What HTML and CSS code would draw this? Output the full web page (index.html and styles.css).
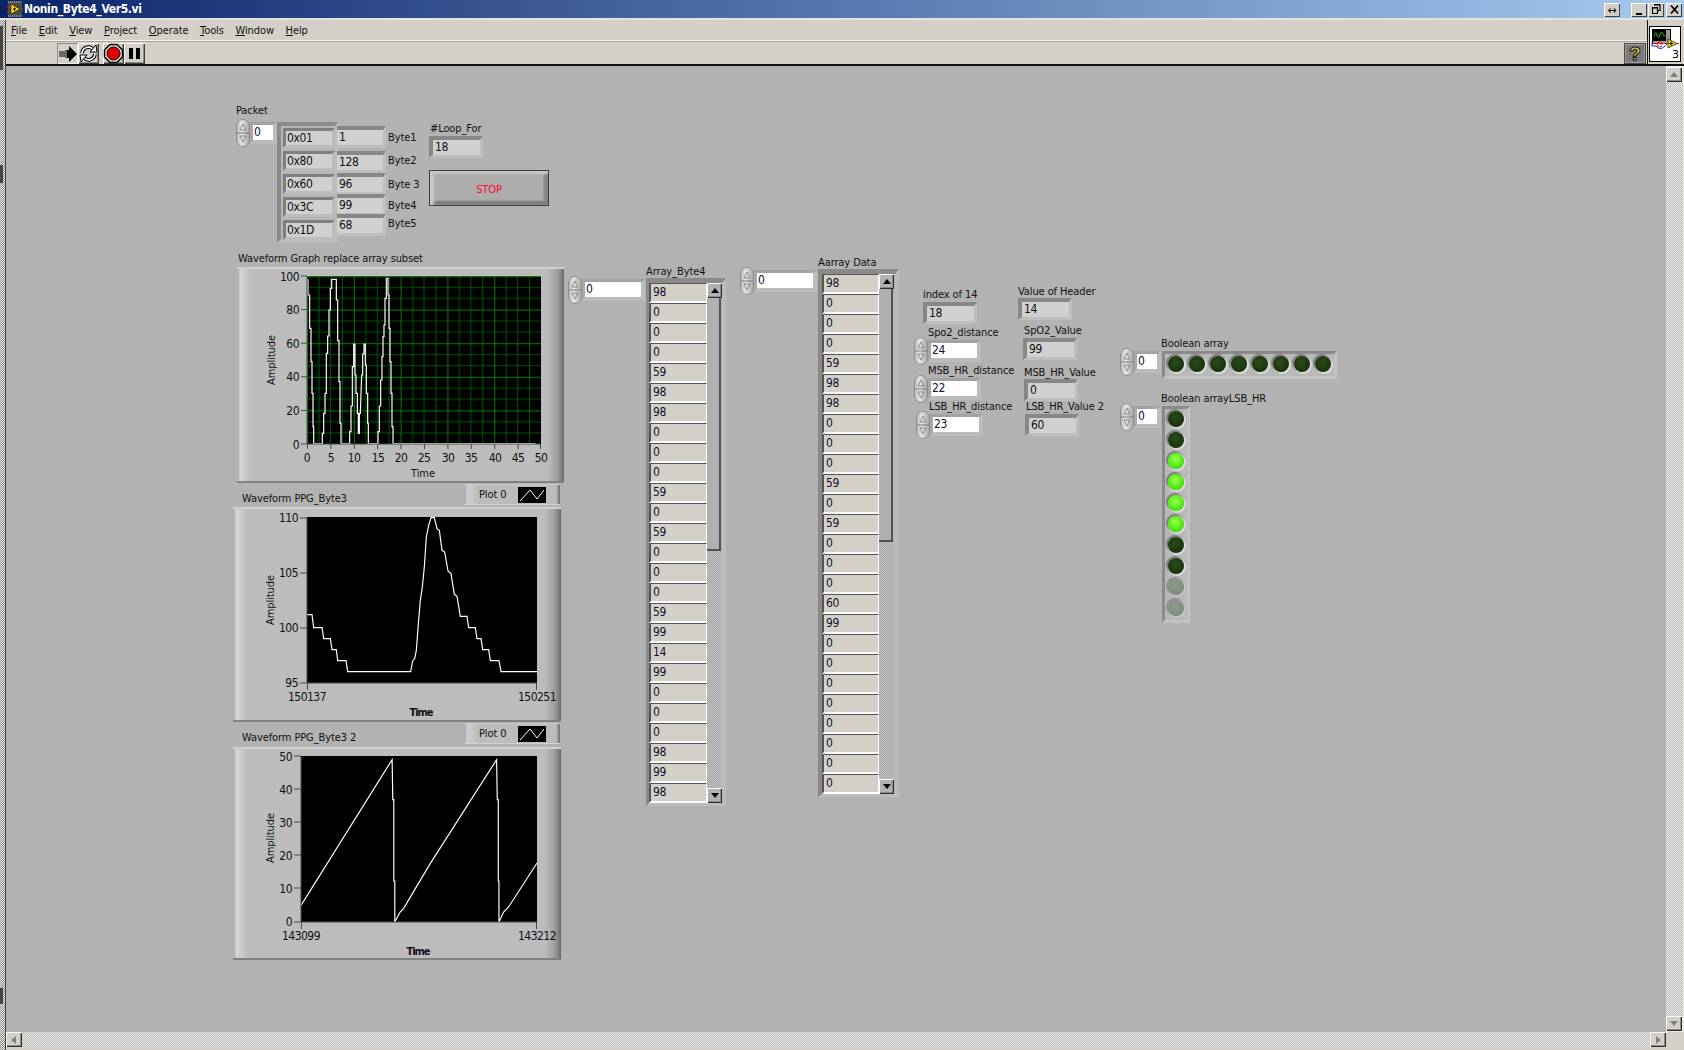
FILE: index.html
```html
<!DOCTYPE html>
<html lang="en">
<head>
<meta charset="utf-8">
<title>Nonin_Byte4_Ver5.vi</title>
<link rel="stylesheet" href="styles.css">
</head>
<body>
<svg class="defs" aria-hidden="true">
  <symbol id="spin" viewBox="0 0 14 28">
    <rect x="0.5" y="0.5" width="13" height="27" rx="6.5" fill="url(#spinfill)" stroke="#8c8c8c"/>
    <path d="M1 14h12" stroke="#7a7a7a"/>
    <path d="M7 5l-3 6M7 5l3 6M4 11h6M7 23l-3-6M7 23l3-6M4 17h6" stroke="#777" stroke-width="0.8" fill="none"/>
  </symbol>
  <linearGradient id="spinfill" x1="0" x2="1" y1="0" y2="0">
    <stop offset="0" stop-color="#b8b8b8"/><stop offset="0.4" stop-color="#e4e4e4"/><stop offset="1" stop-color="#a4a4a4"/>
  </linearGradient>
  <pattern id="grid" patternUnits="userSpaceOnUse" x="307" y="276" width="46.8" height="33.6">
    <rect width="46.8" height="33.6" fill="#000"/>
    <rect y="11" width="46.8" height="1" fill="#005000"/>
    <rect y="22" width="46.8" height="1" fill="#005000"/>
    <rect x="11.5" width="1" height="33.6" fill="#005a00"/>
    <rect x="23" width="1" height="33.6" fill="#005a00"/>
    <rect x="34.9" width="1" height="33.6" fill="#005a00"/>
    <rect x="0" width="1" height="33.6" fill="#008000"/>
    <rect y="0" width="46.8" height="1" fill="#008000"/>
  </pattern>
</svg>

<div class="window">
  <header class="titlebar">
    <svg class="ti-icon" viewBox="0 0 16 16">
      <rect x="1" y="0" width="14" height="16" fill="#4a4a4a"/>
      <path d="M1 1h14M1 15h14" stroke="#ccc" stroke-dasharray="1 1"/>
      <path d="M4 3l9 5-9 5z" fill="#f6e000" stroke="#222" stroke-width="0.7"/>
      <path d="M0 6h4M0 10h4" stroke="#e02020"/>
      <path d="M13 8h3" stroke="#e02020"/>
      <path d="M6 8h3M7.500 6.500v3" stroke="#000"/>
    </svg>
    <span class="ti-text">Nonin_Byte4_Ver5.vi</span>
    <span class="wbtn wbtn-resize">↔</span>
    <span class="wbtn wbtn-min"><svg viewBox="0 0 15 13"><path d="M4 10h6v2H4z"/></svg></span>
    <span class="wbtn wbtn-max"><svg viewBox="0 0 15 13"><path d="M5 1.500h6v6h-2M3.500 4.500h5v6h-5z" fill="none" stroke="#000" stroke-width="1.200"/><path d="M5 1h6v1.500H5zM3 4h6v1.500H3z"/></svg></span>
    <span class="wbtn wbtn-close"><svg viewBox="0 0 15 13"><path d="M4 2.500l7 8M11 2.500l-7 8" stroke="#000" stroke-width="1.800"/></svg></span>
  </header>

  <div class="body">
    <div class="strip"><i class="strip-dark strip-a"></i><i class="strip-dark strip-b"></i><i class="strip-dark strip-c"></i></div>
    <div class="vi">
      <div class="head">
        <div class="bars">
          <nav class="menubar">
            <span><u>F</u>ile</span><span><u>E</u>dit</span><span><u>V</u>iew</span><span><u>P</u>roject</span><span><u>O</u>perate</span><span><u>T</u>ools</span><span><u>W</u>indow</span><span><u>H</u>elp</span>
          </nav>
          <div class="toolbar">
            <div class="tool tool-run"><svg viewBox="0 0 21 21"><path d="M3 8v6M5 8v6M7 8v6M9 7v8" stroke="#000"/><path d="M10 7h2V3l8 8-8 8v-4h-2z" fill="#000"/></svg></div>
            <div class="tool"><svg viewBox="0 0 21 21"><path d="M4 10a6.500 6.500 0 0 1 11-4" fill="none" stroke="#000" stroke-width="3.600"/><path d="M4 10a6.500 6.500 0 0 1 11-4" fill="none" stroke="#fff" stroke-width="1.600"/><path d="M17 11a6.500 6.500 0 0 1-11 4" fill="none" stroke="#000" stroke-width="3.600"/><path d="M17 11a6.500 6.500 0 0 1-11 4" fill="none" stroke="#fff" stroke-width="1.600"/><path d="M12 9h7l-1-7zM9 12H2l1 7z" fill="#fff" stroke="#000"/></svg></div>
            <div class="tool tool-abort"><svg viewBox="0 0 21 21"><path d="M7 1.500h7l5.500 5.500v7L14 19.500H7L1.500 14V7z" fill="#d8d4cc" stroke="#000" stroke-width="1.400"/><circle cx="10.500" cy="10.500" r="6.500" fill="#e00000" stroke="#200"/></svg></div>
            <div class="tool"><svg viewBox="0 0 21 21"><path d="M5 5h4v11H5zM12 5h4v11h-4z" fill="#000"/></svg></div>
            <div class="help"><span>?</span></div>
          </div>
        </div>
        <div class="conn">
          <svg class="vi-icon" viewBox="0 0 32 36">
            <rect x="0.500" y="0.500" width="31" height="35" fill="#fff" stroke="#000"/>
            <rect x="3.500" y="3.500" width="18" height="14" fill="#9a9a9a" stroke="#000"/>
            <rect x="4" y="4" width="13" height="11" fill="#000"/>
            <path d="M5 10q1.500-6 3-1t3 0 3-1 2 1" stroke="#20c020" fill="none"/>
            <path d="M4 17.500h26" stroke="#e02020"/>
            <path d="M3 17v3h4c3 4 7 3 11-2" stroke="#2020c0" fill="none"/>
            <circle cx="10.600" cy="18.500" r="2.500" fill="none" stroke="#e02020"/>
            <path d="M19 13v9l9-4.500z" fill="#f6e000" stroke="#222" stroke-width="0.800"/>
            <path d="M20 17.500h4M22 15.500v4" stroke="#000"/>
            <text class="vi-num" x="23" y="32">3</text>
          </svg>
        </div>
      </div>

      <div class="panelwrap">
        <main class="panel"></main>
        <div class="vsb"><div class="sbtn sbtn-up"></div><div class="check"></div><div class="sbtn sbtn-down"></div></div>
        <div class="hsb"><div class="sbtn sbtn-left"></div><div class="check"></div><div class="sbtn sbtn-right"></div></div>
        <div class="corner"></div>
      </div>
    </div>
  </div>

  <div class="stage">
    <div class="lbl l-packet">Packet</div>
    <div class="ctl c-packet"><svg class="spin"><use href="#spin"/></svg><div class="field w20">0</div></div>
    <div class="cluster">
      <div class="hex">0x01</div><div class="hex">0x80</div><div class="hex">0x60</div><div class="hex">0x3C</div><div class="hex">0x1D</div>
    </div>
    <div class="ind byte b1">1</div><div class="ind byte b2">128</div><div class="ind byte b3">96</div><div class="ind byte b4">99</div><div class="ind byte b5">68</div>
    <div class="lbl l-b1">Byte1</div><div class="lbl l-b2">Byte2</div><div class="lbl l-b3">Byte 3</div><div class="lbl l-b4">Byte4</div><div class="lbl l-b5">Byte5</div>
    <div class="lbl l-loop">#Loop_For</div><div class="ind i-loop">18</div>
    <div class="stop">STOP</div>

    <div class="lbl l-g1">Waveform Graph replace array subset</div>
    <div class="graph g1">
      <svg width="327" height="216" viewBox="237 267 327 216">
        <rect x="307" y="276" width="234" height="168" fill="url(#grid)"/>
        <svg x="307" y="276" width="234" height="168" viewBox="232 78 702 504" preserveAspectRatio="none">
          <path class="trace" d="M235 88V135H240V235H244V335H247V430H250V530H252V581H278V550H282V490H286V430H290V310H294V258H298V180H302V115H306V88H320V150H324V272H328V395H331V520H334V581H360V545H364V468H368V350H372V282H376V375H379V430H383V490H386V550H389V490H392L396 375H399V312H403V282H407V345H410V430H414V520H416V581H445V545H449V468H453V390H457V320H460V260H463V225H466V145H470V85H475V135H478V235H481V335H484V430H487V530H490V581H917"/>
        </svg>
        <path class="axis" d="M307 276V444H541M301 276h6M301 309.600h6M301 343.200h6M301 376.800h6M301 410.400h6M301 444h6M307.500 444v5M330.900 444v5M354.300 444v5M377.700 444v5M401.100 444v5M424.500 444v5M447.900 444v5M471.300 444v5M494.700 444v5M518.100 444v5M540.500 444v5"/>
        <text class="t e" x="299" y="281">100</text><text class="t e" x="299" y="314">80</text><text class="t e" x="299" y="348">60</text><text class="t e" x="299" y="381">40</text><text class="t e" x="299" y="415">20</text><text class="t e" x="299" y="449">0</text>
        <text class="t m" x="307" y="462">0</text><text class="t m" x="331" y="462">5</text><text class="t m" x="354" y="462">10</text><text class="t m" x="378" y="462">15</text><text class="t m" x="401" y="462">20</text><text class="t m" x="424" y="462">25</text><text class="t m" x="448" y="462">30</text><text class="t m" x="471" y="462">35</text><text class="t m" x="495" y="462">40</text><text class="t m" x="518" y="462">45</text><text class="t m" x="541" y="462">50</text>
        <text class="word m" x="423" y="477">Time</text>
        <text class="word m" transform="translate(275 360) rotate(-90)">Amplitude</text>
      </svg>
    </div>

    <div class="lbl l-g2">Waveform PPG_Byte3</div>
    <div class="legend lg2"><span>Plot 0</span><svg class="lg-box" viewBox="0 0 28 16"><rect width="28" height="16"/><path class="lg-line" d="M2 14L12 3l7 9 7-9"/></svg></div>
    <div class="graph g2">
      <svg width="328" height="215" viewBox="233 507 328 215">
        <rect x="307" y="517" width="230" height="166" fill="#000"/>
        <svg x="307" y="517" width="230" height="166" viewBox="230 110 690 498" preserveAspectRatio="none">
          <path class="trace" d="M230 403H245L250 442H275L280 475H300L305 508H318L322 541H347L352 574H541L547 541L553 535L558 510L564 430L570 360L576 320L582 260L588 170L595 135L602 112H612L620 145L627 150L635 210L643 215L653 272L662 280L672 342L680 348L690 408H710L715 442H735L740 475H752L757 508H775L780 541H806L812 574H920"/>
        </svg>
        <path class="axis" d="M307 517V683H537M300 518h7M300 573h7M300 628h7M300 683h7M307.500 683v7M536.500 683v7"/>
        <text class="t e" x="298" y="522">110</text><text class="t e" x="298" y="577">105</text><text class="t e" x="298" y="632">100</text><text class="t e" x="298" y="687">95</text>
        <text class="t m" x="307" y="701">150137</text><text class="t m" x="537" y="701">150251</text>
        <text class="word m b" x="421" y="716">Time</text>
        <text class="word m" transform="translate(274 600) rotate(-90)">Amplitude</text>
      </svg>
    </div>

    <div class="lbl l-g3">Waveform PPG_Byte3 2</div>
    <div class="legend lg3"><span>Plot 0</span><svg class="lg-box" viewBox="0 0 28 16"><rect width="28" height="16"/><path class="lg-line" d="M2 14L12 3l7 9 7-9"/></svg></div>
    <div class="graph g3">
      <svg width="328" height="213" viewBox="233 747 328 213">
        <rect x="301" y="756" width="236" height="166" fill="#000"/>
        <svg x="301" y="756" width="236" height="166" viewBox="213 107 707 498" preserveAspectRatio="none">
          <path class="trace" d="M213 555L486 118L488 238H491V482H494V605L510 575L520 565L600 430L799 118L801 238H804V482H806V605L820 575L835 560L920 428"/>
        </svg>
        <path class="axis" d="M301 756V922H537M294 756h7M294 789h7M294 822h7M294 855h7M294 888h7M294 922h7M301.500 922v7M536.500 922v7"/>
        <text class="t e" x="292" y="761">50</text><text class="t e" x="292" y="794">40</text><text class="t e" x="292" y="827">30</text><text class="t e" x="292" y="860">20</text><text class="t e" x="292" y="893">10</text><text class="t e" x="292" y="926">0</text>
        <text class="t m" x="301" y="940">143099</text><text class="t m" x="537" y="940">143212</text>
        <text class="word m b" x="418" y="955">Time</text>
        <text class="word m" transform="translate(274 838) rotate(-90)">Amplitude</text>
      </svg>
    </div>

    <div class="ctl c-arr1"><svg class="spin"><use href="#spin"/></svg><div class="field w56">0</div></div>
    <div class="lbl l-arr1">Array_Byte4</div>
    <div class="arr a1">
      <div class="list">
        <div class="el">98</div><div class="el">0</div><div class="el">0</div><div class="el">0</div><div class="el">59</div><div class="el">98</div><div class="el">98</div><div class="el">0</div><div class="el">0</div><div class="el">0</div><div class="el">59</div><div class="el">0</div><div class="el">59</div><div class="el">0</div><div class="el">0</div><div class="el">0</div><div class="el">59</div><div class="el">99</div><div class="el">14</div><div class="el">99</div><div class="el">0</div><div class="el">0</div><div class="el">0</div><div class="el">98</div><div class="el">99</div><div class="el">98</div>
      </div>
      <div class="asb"><div class="sbtn sbtn-up dark"></div><div class="thumb"></div><div class="check grey"></div><div class="sbtn sbtn-down dark"></div></div>
    </div>

    <div class="ctl c-arr2"><svg class="spin"><use href="#spin"/></svg><div class="field w56">0</div></div>
    <div class="lbl l-arr2">Aarray Data</div>
    <div class="arr a2">
      <div class="list">
        <div class="el">98</div><div class="el">0</div><div class="el">0</div><div class="el">0</div><div class="el">59</div><div class="el">98</div><div class="el">98</div><div class="el">0</div><div class="el">0</div><div class="el">0</div><div class="el">59</div><div class="el">0</div><div class="el">59</div><div class="el">0</div><div class="el">0</div><div class="el">0</div><div class="el">60</div><div class="el">99</div><div class="el">0</div><div class="el">0</div><div class="el">0</div><div class="el">0</div><div class="el">0</div><div class="el">0</div><div class="el">0</div><div class="el">0</div>
      </div>
      <div class="asb"><div class="sbtn sbtn-up dark"></div><div class="thumb"></div><div class="check grey"></div><div class="sbtn sbtn-down dark"></div></div>
    </div>

    <div class="lbl l-idx">index of 14</div><div class="ind i-idx">18</div>
    <div class="lbl l-hdr">Value of Header</div><div class="ind i-hdr">14</div>
    <div class="lbl l-spo">Spo2_distance</div>
    <div class="ctl c-spo"><svg class="spin"><use href="#spin"/></svg><div class="field w46">24</div></div>
    <div class="lbl l-spov">SpO2_Value</div><div class="ind i-spo">99</div>
    <div class="lbl l-msb">MSB_HR_distance</div>
    <div class="ctl c-msb"><svg class="spin"><use href="#spin"/></svg><div class="field w46">22</div></div>
    <div class="lbl l-msbv">MSB_HR_Value</div><div class="ind i-msb">0</div>
    <div class="lbl l-lsb">LSB_HR_distance</div>
    <div class="ctl c-lsb"><svg class="spin"><use href="#spin"/></svg><div class="field w46">23</div></div>
    <div class="lbl l-lsbv">LSB_HR_Value 2</div><div class="ind i-lsb">60</div>

    <div class="lbl l-b-a">Boolean array</div>
    <div class="ctl c-b-a"><svg class="spin"><use href="#spin"/></svg><div class="field w20">0</div></div>
    <div class="leds leds-h">
      <i class="led"></i><i class="led"></i><i class="led"></i><i class="led"></i><i class="led"></i><i class="led"></i><i class="led"></i><i class="led"></i>
    </div>
    <div class="lbl l-b-l">Boolean arrayLSB_HR</div>
    <div class="ctl c-b-l"><svg class="spin"><use href="#spin"/></svg><div class="field w20">0</div></div>
    <div class="leds leds-v">
      <i class="led"></i><i class="led"></i><i class="led on"></i><i class="led on"></i><i class="led on"></i><i class="led on"></i><i class="led"></i><i class="led"></i><i class="led off"></i><i class="led off"></i>
    </div>
  </div>
</div>
</body>
</html>
```
FILE: styles.css
```css
* { box-sizing: border-box; }
html, body { margin: 0; padding: 0; }
body {
  width: 1684px; height: 1050px; overflow: hidden;
  font-family: "DejaVu Sans", sans-serif; font-stretch: condensed; font-size: 11px; letter-spacing: -0.1px; color: #111;
}
.defs { position: absolute; width: 0; height: 0; }
.window { position: relative; width: 1684px; height: 1050px; display: flex; flex-direction: column; background: #d4d0c8; overflow: hidden; }

/* title bar */
.titlebar { height: 18px; display: flex; align-items: center; flex: none;
  background: linear-gradient(90deg, #0a246a 0, #a6caf0 100%); color: #fff; padding-left: 7px; }
.ti-icon { width: 16px; height: 16px; flex: none; }
.ti-text { font-weight: 700; font-size: 12px; letter-spacing: -0.35px; margin-left: 1px; flex: 1; }
.wbtn { width: 16px; height: 14px; background: #d4d0c8; color: #000; display: flex; align-items: center; justify-content: center;
  box-shadow: inset 1px 1px #fff, inset -1px -1px #404040; font-size: 12px; line-height: 12px; flex: none; margin-top: 1px; }
.wbtn svg { width: 15px; height: 13px; }
.wbtn-resize { margin-right: 11px; }
.wbtn-min { margin-right: 1px; }
.wbtn-max { margin-right: 2px; }
.wbtn-close { margin-right: 2px; }

/* frame */
.body { flex: 1; display: flex; min-height: 0; border-top: 2px solid #e4e2dc; }
.strip { width: 5px; flex: none; position: relative;
  background: repeating-conic-gradient(#8a8a8a 0 25%, #eceae4 0 50%) 0 0 / 2px 2px; }
.strip-dark { position: absolute; left: 0; width: 3px; background: #454545; display: block; }
.strip-a { top: 6px; height: 44px; }
.strip-b { top: 145px; height: 18px; }
.strip-c { top: 968px; height: 16px; }
.vi { flex: 1; min-width: 0; display: flex; flex-direction: column; border-left: 1px solid #404040; }
.head { display: flex; height: 46px; flex: none; border-bottom: 2px solid #111; }
.bars { flex: 1; min-width: 0; display: flex; flex-direction: column; }
.menubar { height: 21px; flex: none; display: flex; gap: 11.7px; align-items: center; padding: 1px 0 0 5px;
  border-bottom: 1px solid #f4f2ee; box-shadow: 0 1px #a8a49c; }
.toolbar { flex: 1; display: flex; padding: 2px 0 0 51px; position: relative; }
.tool { width: 21px; height: 21px; background: #d4d0c8; box-shadow: inset 1px 1px #fff, inset -1px -1px #404040, inset -2px -2px #8a8a8a; flex: none; }
.tool svg { display: block; width: 21px; height: 21px; }
.tool-run { box-shadow: inset 1px 1px #8a8a8a, inset -1px -1px #f2f0ea; }
.tool-abort { margin-left: 4px; }
.help { width: 22px; height: 21px; background: #7a7a7a; margin-left: auto; margin-right: 1px; flex: none; display: flex; align-items: center; justify-content: center;
  box-shadow: inset 1px 1px #4a4a4a, inset -1px -1px #4a4a4a, inset 2px 2px #a0a0a0, inset -2px -2px #9a9a9a; }
.help span { font: 700 19px "Liberation Sans", sans-serif; color: #f6ec50; -webkit-text-stroke: 1px #111; line-height: 19px; }
.conn { width: 37px; flex: none; border-left: 1px solid #111; padding: 6px 0 0 1px; }
.vi-icon { width: 32px; height: 36px; display: block; }
.vi-num { font: 11px "DejaVu Sans", sans-serif; fill: #000; }

/* panel + scrollbars */
.panelwrap { flex: 1; min-height: 0; display: grid; grid-template-columns: 1fr 18px; grid-template-rows: 1fr 18px; }
.panel { background: #b2b2b2; }
.vsb { display: flex; flex-direction: column; padding: 1px 1px 1px 0; background: #eceae4; }
.hsb { display: flex; padding-bottom: 2px; background: #d4d0c8; }
.corner { background: #d4d0c8; }
.check { flex: 1; background: repeating-conic-gradient(#b8b8b8 0 25%, #f0eeea 0 50%) 0 0 / 2px 2px; }
.check.grey { background: repeating-conic-gradient(#a4a4a4 0 25%, #c4c4c4 0 50%) 0 0 / 2px 2px; }
.sbtn { width: 16px; height: 15px; flex: none; position: relative; background: #d4d0c8;
  box-shadow: inset 1px 1px #f8f8f8, inset -1px -1px #303030, inset -2px -2px #8a8a8a; }
.sbtn::after { content: ""; position: absolute; left: 50%; top: 50%; width: 0; height: 0; border: 4px solid transparent; }
.sbtn-up::after { border-bottom: 5px solid #808080; border-top: 0; margin: -3px 0 0 -4px; }
.sbtn-down::after { border-top: 5px solid #808080; border-bottom: 0; margin: -3px 0 0 -4px; }
.sbtn-left::after { border-right: 5px solid #808080; border-left: 0; margin: -4px 0 0 -3px; }
.sbtn-right::after { border-left: 5px solid #808080; border-right: 0; margin: -4px 0 0 -2px; }
.sbtn.dark { width: 15px; background: #b2b2b2; }
.sbtn.dark::after { border-top-color: transparent; border-bottom-color: transparent; }
.sbtn-up.dark::after { border-bottom-color: #000; }
.sbtn-down.dark::after { border-top-color: #000; }

/* free canvas of the front panel */
.stage { position: absolute; inset: 0; pointer-events: none; }
.stage > * { position: absolute; }
.lbl { height: 14px; line-height: 16px; white-space: nowrap; }

.field, .ind, .el, .hex { font-size: 12px; letter-spacing: -0.4px; }

.ctl { display: flex; align-items: center; height: 28px; }
.spin { width: 14px; height: 28px; flex: none; }
.field { flex: none; height: 22px; border-style: solid; border-width: 3px 4px 4px 3px;
  border-color: #a2a2a2 #bcbcbc #bcbcbc #a8a8a8; background: #fff; line-height: 15px; padding-left: 1px; color: #101040; }
.w20 { width: 27px; }
.w46 { width: 53px; }
.w56 { width: 63px; }

.ind { width: 54px; height: 22px; border-style: solid; border-width: 4px 3px 3px 4px;
  border-color: #878787 #bebebe #bebebe #878787; background: #d0d0d0; line-height: 14px; padding: 0 0 0 2px; }
.byte { width: 49px; left: 337px; border-left-width: 0; padding-left: 2px; }
.b1 { top: 126px; } .b2 { top: 151px; } .b3 { top: 173px; } .b4 { top: 194px; } .b5 { top: 214px; }

.cluster { left: 277px; top: 122px; width: 61px; height: 121px; display: flex; flex-direction: column; gap: 3px;
  padding: 2px 0 0 2px; border-style: solid; border-width: 4px 3px 4px 4px;
  border-color: #8a8a8a #bcbcbc #bcbcbc #8a8a8a; background: #b6b6b6; }
.hex { width: 52px; height: 20px; flex: none; border-style: solid; border-width: 3px; border-color: #7e7e7e #bcbcbc #bcbcbc #7e7e7e;
  background: #d0d0d0; line-height: 14px; padding-left: 1px; }

.stop { left: 429px; top: 170px; width: 120px; height: 36px; border: 1px solid #3c3c3c; background: #acacac; color: #ff0828;
  display: flex; align-items: center; justify-content: center; padding-top: 2px;
  box-shadow: inset 0 4px 2px -1px #c8c8c8, inset 5px 0 3px -1px #cacaca, inset -5px 0 3px -1px #808080, inset 0 -5px 2px -1px #7a7a7a; }

.graph { background: linear-gradient(90deg, #a8a8a8 0, #d6d6d6 4px, #c4c4c4 10px, #bcbcbc 16px, #bcbcbc calc(100% - 16px), #9c9c9c calc(100% - 6px), #6a6a6a 100%);
  box-shadow: inset 0 2px #cfcfcf, inset 0 -2px #808080; }
.graph > svg { display: block; }
.trace { fill: none; stroke: #fff; stroke-width: 3.5; stroke-linejoin: miter; }
.axis { fill: none; stroke: #4a4a4a; stroke-width: 1; }
.t { font-family: "DejaVu Sans", sans-serif; font-stretch: condensed; font-size: 12px; letter-spacing: -0.5px; fill: #111; }
.word { font-family: "DejaVu Sans", sans-serif; font-stretch: condensed; font-size: 11px; fill: #111; }
.e { text-anchor: end; }
.m { text-anchor: middle; }
.b { font-weight: 700; letter-spacing: -1px; }

.legend { left: 464px; width: 96px; height: 21px; display: flex; align-items: center; padding-left: 15px;
  background: linear-gradient(90deg, #a8a8a8 0, #d0d0d0 4px, #bcbcbc 14px, #bcbcbc calc(100% - 4px), #6a6a6a 100%);
  box-shadow: inset 0 1px #c8c8c8, inset 0 -1px #d0d0d0; }
.legend span { width: 39px; flex: none; }
.lg-box { width: 28px; height: 16px; flex: none; }
.lg-line { fill: none; stroke: #fff; stroke-width: 1; }
.lg2 { top: 484px; } .lg3 { top: 723px; }

.g1 { left: 237px; top: 267px; width: 327px; height: 216px; }
.g2 { left: 233px; top: 507px; width: 328px; height: 215px; }
.g3 { left: 233px; top: 747px; width: 328px; height: 213px; }

.arr { display: flex; border-style: solid; border-width: 5px 4px 3px 3px; border-color: #8a8a8a #bcbcbc #bcbcbc #8a8a8a; background: #b6b6b6; }
.a1 { left: 646px; top: 278px; width: 80px; height: 528px; }
.a2 { left: 818px; top: 269px; width: 81px; height: 528px; border-left-width: 4px; }
.list { width: 58px; flex: none; display: grid; grid-auto-rows: 20px; }
.a2 .list { width: 57px; }
.el { background: #d4d0c8; border-style: solid; border-width: 1px 1px 2px 2px; border-color: #555 #fff #fff #555; line-height: 17px; padding-left: 2px; color: #101030; }
.asb { width: 15px; flex: none; height: 520px; display: flex; flex-direction: column; border-right: 1px solid transparent; }
.thumb { height: 253px; flex: none; background: #b0b0b0; box-shadow: inset -2px 0 #505050, inset 0 -2px #505050; }

.led { display: block; width: 16px; height: 16px; border-radius: 50%; flex: none;
  background: radial-gradient(circle at 45% 40%, #2c4c1a 0, #1e3810 55%, #122408 100%);
  box-shadow: 1px 1px 1px 1px #dcdcdc, -1px -1px 1px 1px #7a7a7a; }
.led.on { background: radial-gradient(circle at 45% 38%, #a4ff60 0, #52f010 50%, #30c000 100%); }
.led.off { background: radial-gradient(circle at 45% 40%, #8e9c8e 0, #7f8e7f 60%, #6e7e6e 100%); box-shadow: 1px 1px 1px 1px #c4c4c4, -1px -1px 1px 1px #8c8c8c; }
.leds { display: flex; gap: 5px; border-style: solid; border-color: #8a8a8a #c2c2c2 #c2c2c2 #8a8a8a; background: #b8b8b8; }
.leds-h { left: 1162px; top: 351px; width: 175px; height: 28px; border-width: 3px; padding: 2px 3px; }
.leds-v { left: 1162px; top: 406px; width: 28px; height: 217px; border-width: 3px; padding: 2px 3px; flex-direction: column; }

/* canvas places */
.l-packet { left: 236px; top: 103px; }
.c-packet { left: 236px; top: 119px; }
.l-b1 { left: 388px; top: 130px; } .l-b2 { left: 388px; top: 153px; } .l-b3 { left: 388px; top: 177px; }
.l-b4 { left: 388px; top: 198px; } .l-b5 { left: 388px; top: 216px; }
.l-loop { left: 430px; top: 121px; }
.i-loop { left: 429px; top: 136px; }
.l-g1 { left: 238px; top: 251px; } .l-g2 { left: 242px; top: 491px; } .l-g3 { left: 242px; top: 730px; }
.c-arr1 { left: 568px; top: 276px; } .l-arr1 { left: 646px; top: 264px; }
.c-arr2 { left: 740px; top: 267px; } .l-arr2 { left: 818px; top: 255px; }
.l-idx { left: 923px; top: 287px; } .i-idx { left: 923px; top: 302px; }
.l-hdr { left: 1018px; top: 284px; } .i-hdr { left: 1018px; top: 298px; }
.l-spo { left: 928px; top: 325px; } .c-spo { left: 914px; top: 337px; }
.l-spov { left: 1024px; top: 323px; } .i-spo { left: 1023px; top: 338px; }
.l-msb { left: 928px; top: 363px; } .c-msb { left: 914px; top: 375px; }
.l-msbv { left: 1024px; top: 365px; } .i-msb { left: 1024px; top: 379px; }
.l-lsb { left: 929px; top: 399px; } .c-lsb { left: 916px; top: 411px; }
.l-lsbv { left: 1026px; top: 399px; } .i-lsb { left: 1025px; top: 414px; }
.l-b-a { left: 1161px; top: 336px; } .c-b-a { left: 1120px; top: 348px; }
.l-b-l { left: 1161px; top: 391px; } .c-b-l { left: 1120px; top: 403px; }
```
